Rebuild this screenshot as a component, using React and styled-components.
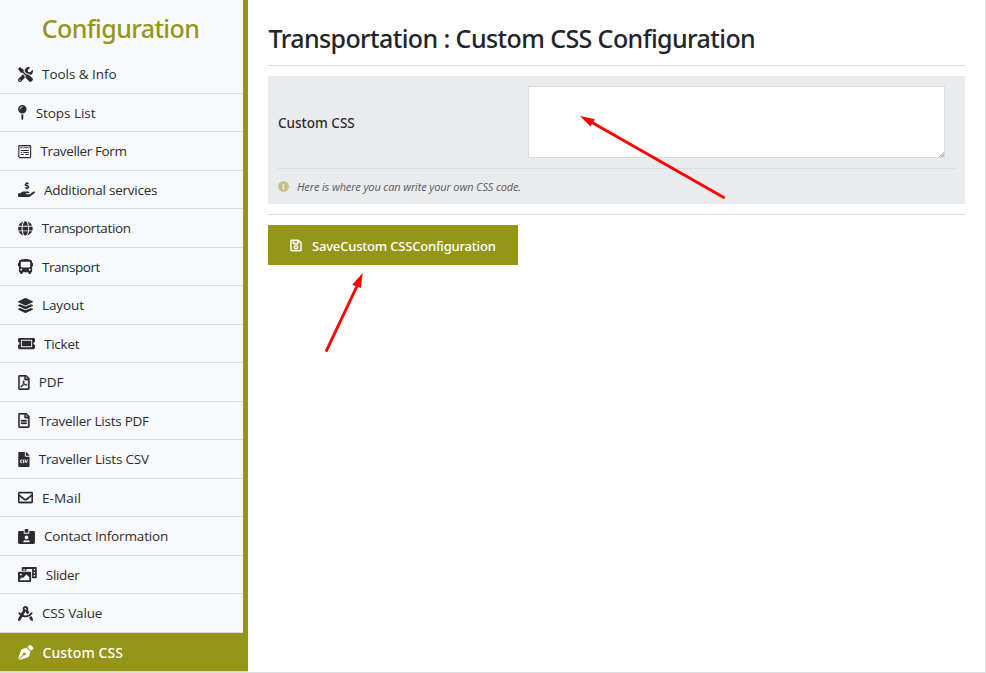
import React from 'react';
import styled, { createGlobalStyle, css } from 'styled-components';
import {
  FaTools, FaMapPin, FaHandHoldingUsd, FaGlobe, FaBus, FaLayerGroup, FaTicketAlt,
  FaRegFilePdf, FaRegFileAlt, FaFileCsv, FaRegEnvelope, FaIdCardAlt, FaPhotoVideo,
  FaDraftingCompass, FaPenNib, FaInfoCircle, FaRegSave,
} from 'react-icons/fa';

const olive = '#95951a';
const line = '#dadcde';

const GlobalStyle = createGlobalStyle`
  *, *::before, *::after { box-sizing: border-box; }
  body { margin: 0; background: #fff; overflow: hidden; font-family: "Open Sans", "Noto Sans", sans-serif; }
`;

const Page = styled.div`
  position: relative;
  display: flex;
  width: 986px;
  height: 673px;
  border-right: 1px solid ${line};
  border-bottom: 1px solid ${line};
`;

const Sidebar = styled.aside`
  flex: 0 0 248px;
  min-width: 0;
  height: 672px;
  background: #f8f9fb;
  border-right: 5px solid ${olive};
`;

const SidebarTitle = styled.h2`
  margin: 0;
  height: 55px;
  padding-right: 2px;
  font: 500 25px/56px "Noto Sans", sans-serif;
  letter-spacing: -0.6px;
  text-align: center;
  color: ${olive};
`;

const Menu = styled.ul`
  margin: 0;
  padding: 0;
  list-style: none;
`;

const MenuItem = styled.li`
  display: flex;
  align-items: center;
  gap: 9px;
  height: 38.5px;
  padding: 1px 0 0 18px;
  border-bottom: 1px solid ${line};
  font-size: 13.5px;
  line-height: 20px;
  letter-spacing: ${(p) => p.$spacing}px;
  color: #2c2c30;
  svg { flex: none; height: 15px; width: ${(p) => p.$iconWidth}px; }
  ${(p) => p.$outlined && css`
    svg { stroke: currentColor; stroke-width: 12; }
  `}
  ${(p) => p.$active && css`
    width: 248px;
    height: 39.5px;
    padding-top: 2px;
    background: ${olive};
    color: #fff;
    font-family: "Noto Sans", sans-serif;
    font-size: 14px;
    font-weight: 500;
  `}
`;

const Main = styled.main`
  flex: 1;
  min-width: 0;
  padding: 0 20px;
`;

const Title = styled.h1`
  margin: 0 0 10px;
  height: 66px;
  border-bottom: 1px solid ${line};
  font: 500 25px/76px "Noto Sans", sans-serif;
  letter-spacing: -0.6px;
  text-indent: 0.5px;
  white-space: nowrap;
  color: #212529;
`;

const Panel = styled.section`
  height: 128px;
  padding: 10px;
  background: #e9ebed;
`;

const Field = styled.div`
  display: grid;
  grid-template-columns: 250px 417px;
  align-items: center;
  height: 83px;
  padding-bottom: 10px;
  border-bottom: 1px solid ${line};
`;

const Label = styled.label`
  padding-top: 2px;
  font: 500 13.5px/20px "Noto Sans", sans-serif;
  color: #2c2c30;
`;

const CssInput = styled.textarea`
  display: block;
  width: 417px;
  height: 72px;
  margin: 0;
  border: 1px solid ${line};
  background: #fff;
  outline: none;
  resize: both;
  &::-webkit-resizer {
    background: linear-gradient(135deg, transparent 50%, #b4b4b4 50% 62%, #e8e8e8 62% 74%, #b4b4b4 74% 84%, #e8e8e8 84%) right bottom / 6px 6px no-repeat;
  }
`;

const Hint = styled.p`
  display: flex;
  align-items: center;
  gap: 8px;
  margin: 0;
  height: 35px;
  font-size: 11px;
  font-style: italic;
  letter-spacing: -0.14px;
  color: #5c5c5c;
  svg { width: 11px; height: 11px; color: #c3c384; }
`;

const Actions = styled.div`
  margin-top: 10px;
  padding-top: 10px;
  border-top: 1px solid ${line};
`;

const SaveButton = styled.button`
  display: flex;
  align-items: center;
  width: 250px;
  height: 40px;
  padding: 2px 0 0 22px;
  gap: 10px;
  border: 0;
  background: ${olive};
  color: #fff;
  font: 500 13px/20px "Noto Sans", sans-serif;
  letter-spacing: -0.19px;
  white-space: nowrap;
  svg { width: 12px; height: 13px; margin-top: -2px; flex: none; stroke: currentColor; stroke-width: 14; }
`;

const Arrows = styled.svg`
  position: absolute;
  inset: 0;
  pointer-events: none;
`;

const FormIcon = () => (
  <svg width="13" height="15" viewBox="0 0 13 15" fill="none" stroke="currentColor">
    <rect x=".6" y="1.6" width="11.8" height="12" rx=".8" strokeWidth="1.1" />
    <path d="M1.5 3l1.3 1.2L4.2 3l1.2 1.2L6.6 3l1.2 1.2L9 3l1.2 1.2L11.5 3" strokeWidth=".9" />
    <path d="M2.5 6.5h8M5 8.5h5.5M7 10.5h3.5" />
    <path d="M2.6 8.5h1.2M2.6 10.5h2.8" />
  </svg>
);

const items = [
  { label: 'Tools & Info', Icon: FaTools, spacing: -0.05, width: 15 },
  { label: 'Stops List', Icon: FaMapPin, spacing: -0.05, width: 8.7 },
  { label: 'Traveller Form', Icon: FormIcon, spacing: -0.37, width: 13.5 },
  { label: 'Additional services', Icon: FaHandHoldingUsd, spacing: -0.23, width: 17 },
  { label: 'Transportation', Icon: FaGlobe, spacing: -0.37, width: 14.8 },
  { label: 'Transport', Icon: FaBus, spacing: -0.45, width: 15 },
  { label: 'Layout', Icon: FaLayerGroup, spacing: -0.1, width: 15 },
  { label: 'Ticket', Icon: FaTicketAlt, spacing: -0.25, width: 17 },
  { label: 'PDF', Icon: FaRegFilePdf, spacing: -0.1, width: 11.8, outlined: true },
  { label: 'Traveller Lists PDF', Icon: FaRegFileAlt, spacing: -0.25, width: 11.8, outlined: true },
  { label: 'Traveller Lists CSV', Icon: FaFileCsv, spacing: -0.2, width: 11.8 },
  { label: 'E-Mail', Icon: FaRegEnvelope, spacing: 0.1, width: 15, outlined: true },
  { label: 'Contact Information', Icon: FaIdCardAlt, spacing: -0.14, width: 17 },
  { label: 'Slider', Icon: FaPhotoVideo, spacing: -0.3, width: 18.8 },
  { label: 'CSS Value', Icon: FaDraftingCompass, spacing: -0.15, width: 15 },
  { label: 'Custom CSS', Icon: FaPenNib, spacing: 0.1, width: 15.5, active: true },
];

export default function App() {
  return (
    <Page>
      <GlobalStyle />
      <Sidebar>
        <SidebarTitle>Configuration</SidebarTitle>
        <Menu>
          {items.map(({ label, Icon, spacing, width, outlined, active }) => (
            <MenuItem key={label} $spacing={spacing} $iconWidth={width} $outlined={outlined} $active={active}>
              <Icon />
              <span>{label}</span>
            </MenuItem>
          ))}
        </Menu>
      </Sidebar>
      <Main>
        <Title>Transportation : Custom CSS Configuration</Title>
        <Panel>
          <Field>
            <Label htmlFor="custom-css">Custom CSS</Label>
            <CssInput id="custom-css" />
          </Field>
          <Hint><FaInfoCircle />Here is where you can write your own CSS code.</Hint>
        </Panel>
        <Actions>
          <SaveButton type="button"><FaRegSave />SaveCustom CSSConfiguration</SaveButton>
        </Actions>
      </Main>
      <Arrows width="985" height="672" viewBox="0 0 985 672">
        <g stroke="#f00" strokeWidth="2.9" fill="none">
          <path d="M724.7 198 592 122.5" />
          <path d="M326 351.7 357.5 285" />
        </g>
        <path fill="#f00" d="M580 116l15 3.2-4.5 7.3zM362.7 273l-1.9 15-8.6-3.3z" />
      </Arrows>
    </Page>
  );
}
